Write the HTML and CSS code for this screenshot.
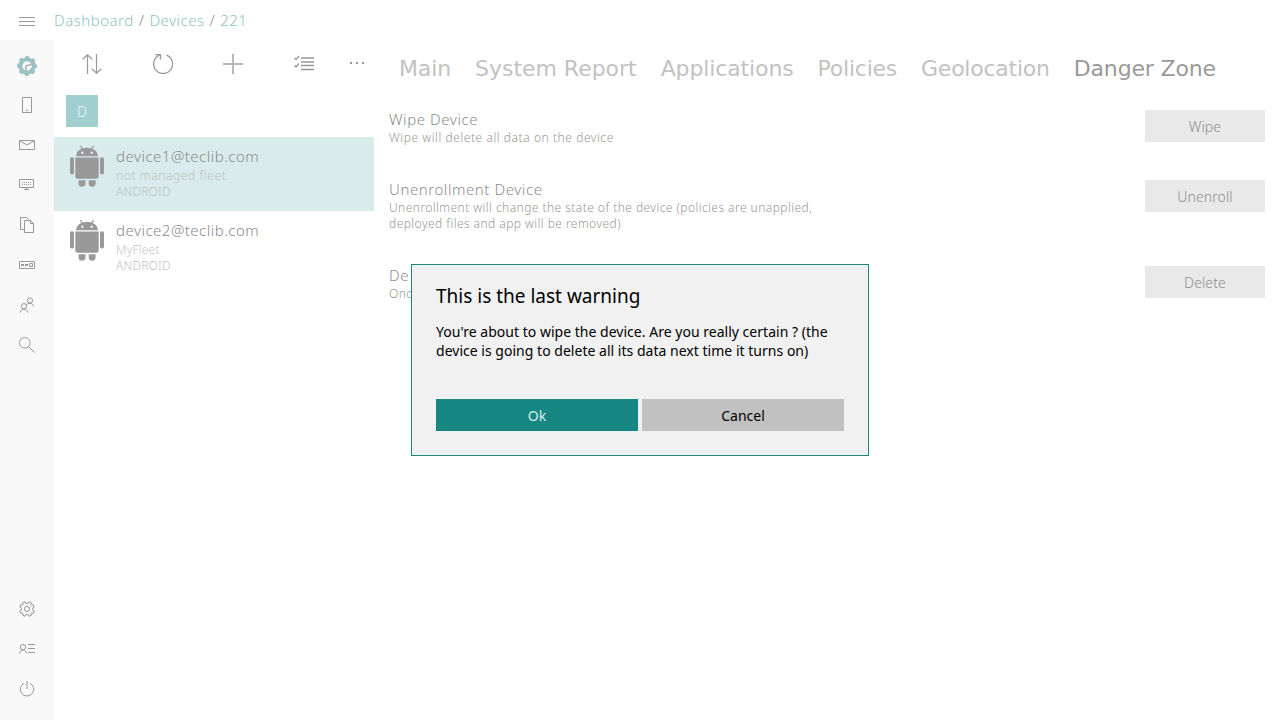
FILE: index.html
```html
<!DOCTYPE html>
<html lang="en">
<head>
<meta charset="utf-8">
<title>Device 221</title>
<link rel="stylesheet" href="styles.css">
</head>
<body>
<svg class="defs" width="0" height="0">
  <symbol id="android" viewBox="0 0 34 41">
    <path d="M6 10.200C6.300 6.500 8.500 3.900 11.600 2.700L9.700.3l1.200-.6 2 2.700a14 14 0 0 1 8.200 0L23.100-.3l1.200.6-1.900 2.400c3.100 1.200 5.300 3.800 5.600 7.500z"/>
    <path d="M5.300 11.500h23.400v18.600a2.600 2.600 0 0 1-2.600 2.600H7.900a2.600 2.600 0 0 1-2.600-2.600z"/>
    <rect x="0" y="11.200" width="4" height="17.300" rx="1.900"/><rect x="30" y="11.200" width="4" height="17.300" rx="1.900"/>
    <path d="M8.600 34.200h6.900v3a3.400 3.400 0 0 1-6.900 0zM18.700 34.200h6.900v3a3.400 3.400 0 0 1-6.900 0z"/>
    <circle class="eye" cx="12.300" cy="6.700" r="1.200"/><circle class="eye" cx="21.700" cy="6.700" r="1.200"/>
  </symbol>
</svg>
<header class="topbar">
  <div class="burger"><svg class="icon" width="16" height="10"><path d="M0 .5h16M0 4.500h16M0 8.500h16"/></svg></div>
  <nav class="crumbs"><a>Dashboard</a><i>/</i><a>Devices</a><i>/</i><a>221</a></nav>
</header>
<div class="shell">
  <aside class="rail">
    <div class="slot logo"><svg width="20" height="20" viewBox="0 0 20 20"><circle cx="10" cy="10" r="6.700" fill="none" stroke="#9ac2c2" stroke-width="4"/><circle cx="10" cy="10" r="9" fill="none" stroke="#9ac2c2" stroke-width="2" stroke-dasharray="3.800 3.270" stroke-dashoffset="1.900"/><path d="M9 15.500V10l9-2.700" fill="none" stroke="#b4b4b4" stroke-width="1.700"/></svg></div>
    <div class="slot"><svg class="icon" width="10" height="16"><path d="M.5.5h9v15h-9zM4 13.500h2"/></svg></div>
    <div class="slot"><svg class="icon" width="16" height="10"><path d="M.5.500h15v9H.5zM1 1l7 4 7-4"/></svg></div>
    <div class="slot"><svg class="icon" width="16" height="12"><path d="M.5.500h14v8H.5zM5 10.500h5M7.500 9v1"/><path d="M3 3.500h9M3 5.500h9" stroke-dasharray="1 1"/></svg></div>
    <div class="slot"><svg class="icon" width="16" height="16"><path d="M5 12.500H1.500V.500h6l2.500 2M5.500 3.500h6l3 3v9h-9zM11.500 3.500v3h3"/></svg></div>
    <div class="slot"><svg class="icon" width="16" height="8"><path d="M.5.500h15v7H.5zM10.500 2.500h3v3h-3z"/><path d="M2 4h3M6 4h3" stroke-width="2"/></svg></div>
    <div class="slot"><svg class="icon" width="16" height="16"><circle cx="11" cy="3.500" r="2.700"/><circle cx="5" cy="9.300" r="2.700"/><path d="M1.200 15.500c.4-2 1.800-3.400 3.800-3.400s3.400 1.400 3.800 3.400M7.300 7.700c.9-.9 2.200-1.400 3.700-1.400 2 0 3.200 1.200 3.500 3.200"/></svg></div>
    <div class="slot"><svg class="icon" width="16" height="16"><circle cx="5.800" cy="5.800" r="5.300"/><path d="M9.500 9.500l6.200 6.200"/></svg></div>
    <div class="spacer"></div>
    <div class="slot"><svg class="icon" width="16" height="16" viewBox="0 0 16 16"><circle cx="8" cy="8" r="2.500"/><path d="M6.700 2.300 6 .7 3.500 1.800l.6 1.600-.7.700-1.600-.6L.7 6l1.600.7v2.600L.7 10l1.100 2.500 1.600-.6.7.7-.6 1.600L6 15.300l.7-1.600h2.600l.7 1.600 2.500-1.100-.6-1.600.7-.7 1.600.6 1.100-2.500-1.600-.7V6.700L15.300 6l-1.100-2.500-1.600.6-.7-.7.6-1.600L10 .7l-.7 1.600z"/></svg></div>
    <div class="slot"><svg class="icon" width="16" height="10"><circle cx="4" cy="3.200" r="2.700"/><path d="M.5 9.500c.3-2.200 1.600-3.500 3.500-3.500s3.200 1.300 3.500 3.500M9 .5h7M9 4.500h7M9 8.500h7"/></svg></div>
    <div class="slot"><svg class="icon" width="16" height="16"><path d="M8 0v8M5 2.300a6.700 6.700 0 1 0 6 0"/></svg></div>
  </aside>
  <section class="list">
    <div class="tools">
      <svg class="icon sort" width="20" height="20"><path d="M5.500 20V1M.7 5.300l4.800-4.500 4.800 4.500M14.500 0v19M9.700 14.700l4.800 4.500 4.800-4.500"/></svg>
      <svg class="icon bold" width="20" height="20"><path d="M6.500 1.200A9.500 9.500 0 1 0 13.500 1.100M2.500.6H7.500V5.500"/></svg>
      <svg class="icon plus" width="20" height="20"><path d="M10 0v20M0 10h20"/></svg>
      <svg class="icon bold" width="20" height="20"><path d="M7 4h13M7 8h13M7 11.500h13M7 15.500h13M.5 4l1.500 1.500 3-3.500M.5 11.500l1.500 1.500 3-3.500"/></svg>
      <svg class="icon dots" width="20" height="20"><path d="M3 9h2M9 9h2M15 9h2"/></svg>
    </div>
    <div class="letter">D</div>
    <div class="device selected"><svg class="droid" width="34" height="41"><use href="#android"/></svg><div><h3>device1@teclib.com</h3><p class="fleet">not managed fleet</p><p>ANDROID</p></div></div>
    <div class="device"><svg class="droid" width="34" height="41"><use href="#android"/></svg><div><h3>device2@teclib.com</h3><p>MyFleet</p><p>ANDROID</p></div></div>
  </section>
  <main class="content">
    <nav class="tabs"><a class="snug">Main</a><a>System Report</a><a class="snug">Applications</a><a class="tight">Policies</a><a class="tight">Geolocation</a><a class="active">Danger Zone</a></nav>
    <div class="row"><div class="info"><h3>Wipe Device</h3><p class="wide">Wipe will delete all data on the device</p></div><button class="btn">Wipe</button></div>
    <div class="row tall"><div class="info"><h3>Unenrollment Device</h3><p>Unenrollment will change the state of the device (policies are unapplied,<br>deployed files and app will be removed)</p></div><button class="btn">Unenroll</button></div>
    <div class="row"><div class="info"><h3 class="wide">De</h3><p>Once</p></div><button class="btn">Delete</button></div>
  </main>
</div>
<div class="dialog">
  <h2>This is the last warning</h2>
  <p>You're about to wipe the device. Are you really certain ? (the<br>device is going to delete all its data next time it turns on)</p>
  <div class="actions"><button class="ok">Ok</button><button class="cancel">Cancel</button></div>
</div>
</body>
</html>
```
FILE: styles.css
```css
* { box-sizing: border-box; margin: 0; padding: 0; }
body { width: 1280px; height: 720px; overflow: hidden; background: #fff; color: #8c8c8c; font-family: "Noto Sans", sans-serif; font-weight: 300; }
.defs { position: absolute; }
h2, h3 { font-weight: inherit; }
button { border: 0; font-family: inherit; font-size: 14px; font-weight: inherit; }
.icon { fill: none; stroke: #999; stroke-width: 1; display: block; }
.topbar { display: flex; height: 40px; }
.burger { width: 54px; padding: 17px 0 0 19px; }
.crumbs { font-size: 15px; line-height: 40px; color: #8cc5c3; white-space: nowrap; letter-spacing: .5px; }
.crumbs i { font-style: normal; color: #8c8c8c; margin: 0 5px; }
.shell { display: flex; height: 680px; }
.rail { width: 54px; background: #f9f9f9; display: flex; flex-direction: column; padding: 5px 0 11px; }
.slot { height: 40px; display: flex; align-items: center; justify-content: center; }
.logo { padding-top: 2px; }
.spacer { flex: 1; }
.list { width: 320px; }
.tools { height: 55px; padding: 14px 0 0 28px; display: grid; grid-template-columns: 71px 70px 71px 53px 20px; }
.sort { stroke-width: 1.200; }
.bold { stroke-width: 1.300; }
.plus { stroke: #b8b8b8; stroke-width: 2; }
.dots { stroke-width: 2; }
.letter { width: 32px; height: 32px; margin: 0 0 10px 12px; background: #a0cfcd; color: #f0f8f8; font-size: 14px; line-height: 34px; text-align: center; }
.device { height: 74px; display: flex; gap: 12px; padding: 9px 0 0 16px; }
.selected { background: #d9ebea; }
.droid { fill: #999; }
.eye { fill: #eee; }
.device h3 { font-size: 15px; line-height: 20px; margin-bottom: 2px; letter-spacing: .49px; }
.device p { font-size: 12px; line-height: 16px; color: #bfbfbf; letter-spacing: .2px; }
.device .fleet { letter-spacing: .6px; }
.content { flex: 1; padding: 0 15px; }
.tabs { display: flex; gap: 24px; padding-left: 10px; height: 70px; font: 22px/58px "DejaVu Sans", sans-serif; color: #c2c2c2; white-space: nowrap; letter-spacing: -.03px; }
.tabs .snug { letter-spacing: -.12px; }
.tabs .tight { letter-spacing: -.24px; }
.tabs .active { color: #999; letter-spacing: -.15px; }
.row { display: flex; justify-content: space-between; align-items: flex-start; height: 70px; }
.tall { height: 86px; }
.info h3 { font-size: 15px; line-height: 18px; margin-bottom: 2px; letter-spacing: .57px; }
.info p { font-size: 12px; line-height: 16px; color: #989898; letter-spacing: .45px; white-space: nowrap; }
.info .wide { letter-spacing: .56px; }
.btn { width: 120px; height: 32px; background: #e9e9e9; color: #8c8c8c; padding-top: 1px; letter-spacing: .1px; }
.dialog { position: absolute; left: 411px; top: 264px; width: 458px; height: 192px; border: 1px solid #168782; background: #f1f1f1; color: #000; padding: 17px 24px 24px; display: flex; flex-direction: column; font-weight: 400; }
.dialog h2 { font-size: 19px; line-height: 28px; }
.dialog p { font-size: 14px; line-height: 19px; margin-top: 12px; white-space: nowrap; letter-spacing: .02px; }
.actions { display: flex; gap: 4px; margin-top: auto; }
.actions button { flex: 1; height: 32px; padding-top: 1px; }
.ok { background: #168782; color: #d8eceb; }
.cancel { background: #c1c1c1; color: #000; }
```
